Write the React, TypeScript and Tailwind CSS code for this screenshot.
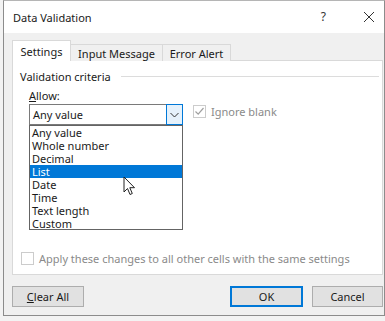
import React from "react";

const items = ["Any value", "Whole number", "Decimal", "List", "Date", "Time", "Text length", "Custom"];

function Check({ checked }: { checked?: boolean }) {
  return (
    <div className="w-[13px] h-[13px] border border-[#cccccc] bg-white flex items-center justify-center shrink-0">
      {checked && (
        <svg width="11" height="11" viewBox="0 0 11 11">
          <path d="M1.5 5.5 L4.2 8.2 L9.5 2" fill="none" stroke="#a0a0a0" strokeWidth="1.2" />
        </svg>
      )}
    </div>
  );
}

export default function App() {
  return (
    <div
      className="w-[385px] h-[321px] overflow-hidden bg-[#f3f3f3] text-[11px] text-[#1a1a1a]"
      style={{ fontFamily: '"Noto Sans", "Open Sans", sans-serif' }}
    >
      <div className="ml-[3px] w-[382px] h-[316px] border border-[#8c8c8c] border-t-[#b5b5b5] bg-[#f0f0f0] flex flex-col">
        {/* title bar */}
        <div className="h-[32px] bg-white flex items-center pl-[9px] shrink-0">
          <span className="text-[11px] leading-none">Data Validation</span>
          <span className="ml-auto text-[12px] leading-none mr-[37px] text-[#333]">?</span>
          <svg width="12" height="12" viewBox="0 0 12 12" className="mr-[9px]">
            <path d="M1 1 L11 11 M11 1 L1 11" stroke="#333" strokeWidth="1" />
          </svg>
        </div>
        {/* body */}
        <div className="flex-1 flex flex-col pl-[8px] pr-[1px] pt-[7px]">
          {/* tabs */}
          <div className="flex items-end h-[21px] relative z-10">
            <div className="h-[21px] w-[59px] bg-white border border-[#d9d9d9] border-b-0 flex items-center justify-center leading-none">
              Settings
            </div>
            <div className="h-[17px] w-[92px] bg-[#f0f0f0] border border-[#d9d9d9] border-l-0 border-b-0 flex items-center justify-center leading-none">
              Input Message
            </div>
            <div className="h-[17px] w-[68px] bg-[#f0f0f0] border border-[#d9d9d9] border-l-0 border-b-0 flex items-center justify-center leading-none">
              Error Alert
            </div>
          </div>
          {/* panel */}
          <div className="h-[215px] -mt-[1px] bg-white border border-[#d9d9d9] flex flex-col pl-[7px] pr-[3px]">
            <div className="flex items-center mt-[8px] h-[14px]">
              <span className="leading-none">Validation criteria</span>
              <div className="flex-1 ml-[10px] h-[1px] bg-[#dcdcdc]"></div>
            </div>
            <div className="ml-[9px] mt-[7px] leading-none">
              <span className="underline">A</span>llow:
            </div>
            <div className="flex items-start ml-[9px] mt-[3px]">
              <div className="relative w-[154px] h-[21px] border border-[#7a7a7a] bg-white flex items-center">
                <span className="pl-[3px] leading-none flex-1">Any value</span>
                <div className="w-[17px] h-[21px] -mr-[1px] -mt-[1px] -mb-[1px] self-stretch bg-[#e5f1fb] border border-[#0078d7] flex items-center justify-center">
                  <svg width="9" height="6" viewBox="0 0 9 6">
                    <path d="M0.5 1 L4.5 5 L8.5 1" fill="none" stroke="#333" strokeWidth="1" />
                  </svg>
                </div>
                {/* dropdown list */}
                <div className="absolute left-[-1px] top-[20px] w-[154px] h-[105px] border border-[#646464] bg-white z-20 flex flex-col">
                  {items.map((it) => (
                    <div
                      key={it}
                      className={
                        "h-[13px] leading-[13px] pl-[2px] " +
                        (it === "List" ? "bg-[#0078d7] text-white" : "")
                      }
                    >
                      {it}
                    </div>
                  ))}
                  <svg
                    className="absolute left-[93px] top-[50px]"
                    width="13"
                    height="20"
                    viewBox="0 0 13 20"
                  >
                    <path
                      d="M1 1 L1 16 L4.5 12.5 L7 18.5 L9.3 17.5 L6.8 11.7 L11.5 11.7 Z"
                      fill="white"
                      stroke="#222"
                      strokeWidth="1"
                      strokeLinejoin="round"
                    />
                  </svg>
                </div>
              </div>
              <div className="ml-[10px] mt-[1px] flex items-center gap-[5px]">
                <Check checked />
                <span className="text-[#8a8a8a] leading-none">Ignore blank</span>
              </div>
            </div>
            <div className="flex-1"></div>
            <div className="flex items-center gap-[5px] mb-[9px] pl-[1px]">
              <Check />
              <span className="text-[#8a8a8a] leading-none">
                Apply these changes to all other cells with the same settings
              </span>
            </div>
          </div>
          {/* buttons */}
          <div className="flex mt-[11px] items-center">
            <div className="w-[72px] h-[21px] bg-[#e1e1e1] border border-[#adadad] flex items-center justify-center leading-none">
              <span>
                <span className="underline">C</span>lear All
              </span>
            </div>
            <div className="ml-auto w-[73px] h-[21px] bg-[#e1e1e1] border-2 border-[#0078d7] flex items-center justify-center leading-none">
              OK
            </div>
            <div className="ml-[9px] w-[71px] h-[21px] bg-[#e1e1e1] border border-[#adadad] flex items-center justify-center leading-none">
              Cancel
            </div>
          </div>
        </div>
      </div>
    </div>
  );
}
